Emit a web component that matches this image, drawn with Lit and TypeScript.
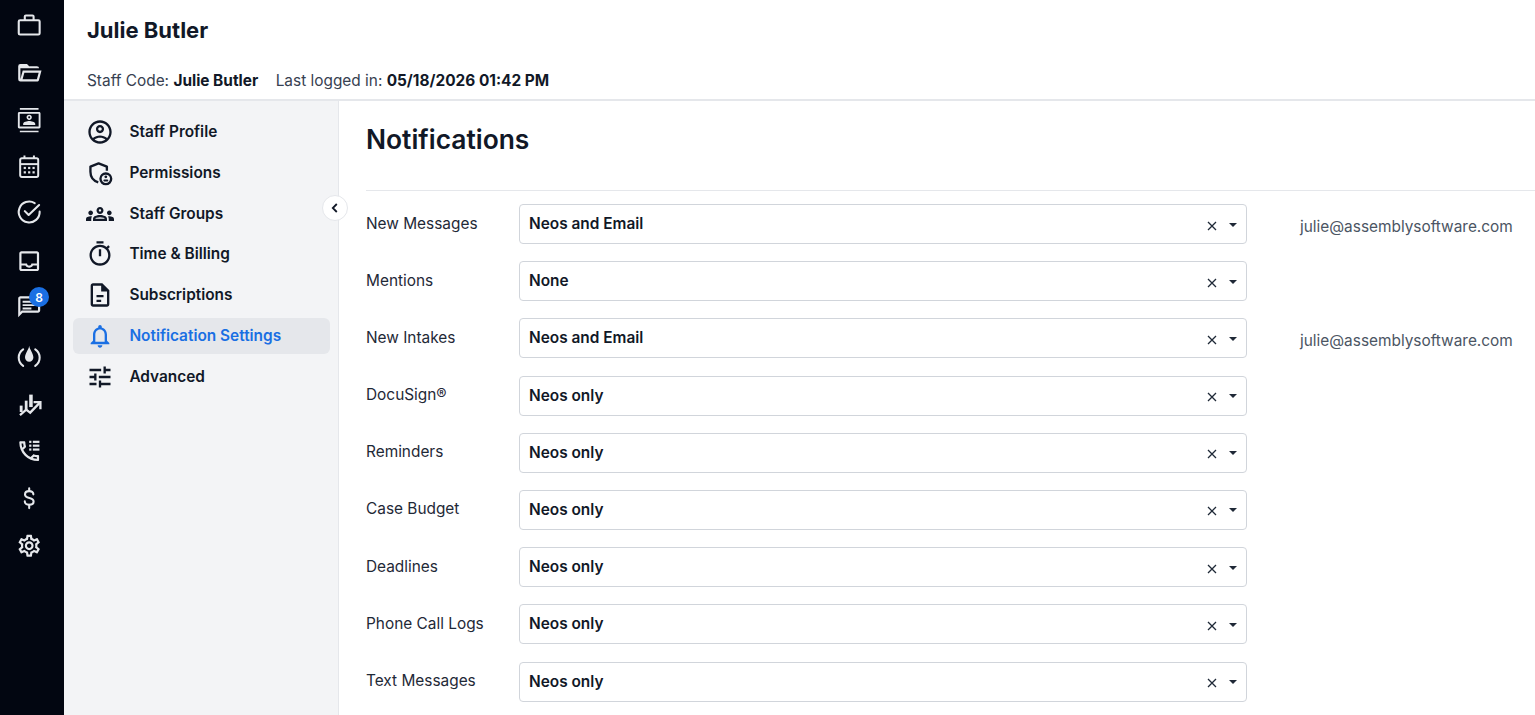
import { LitElement, html, css, svg } from "lit";
import { customElement } from "lit/decorators.js";

const fillI = (d: string) => svg`<path fill="currentColor" fill-rule="evenodd" d=${d}></path>`;

const rail = [
  { dy: 0, icon: svg`<g fill="none" stroke="currentColor" stroke-width="1.900" stroke-linejoin="round"><rect x="2.500" y="7.500" width="19" height="13" rx="1.200"/><path d="M8 7.500V4.200a1 1 0 0 1 1-1h6a1 1 0 0 1 1 1v3.300"/></g>` },
  { dy: -0.5, icon: fillI("M6.100 10 4 18V8h17a2 2 0 0 0-2-2h-7l-2-2H4a2 2 0 0 0-2 2v12a2 2 0 0 0 2 2h15c.9 0 1.700-.6 1.900-1.500L23.200 10H6.100M19 18H6l1.600-6h13L19 18Z") },
  { dy: 0, icon: fillI("M20.500 1H3.500v1.500h17V1zM3.500 23h17v-1.500h-17V23zM21 4.500H3C2.200 4.500 1.700 5.100 1.700 5.800v12.400C1.700 18.900 2.200 19.500 3 19.500h18c.8 0 1.300-.6 1.300-1.300V5.800C22.300 5.100 21.800 4.500 21 4.500zm-.4 13.300H3.400V6.200h17.200v11.600zM12 11.800c1.400 0 2.400-1.100 2.400-2.400S13.400 7 12 7 9.600 8.100 9.600 9.400 10.600 11.800 12 11.800zm0-3.400c.5 0 .9.4.9 1s-.4 1-.9 1-.9-.4-.9-1 .4-1 .9-1zM17.500 15.300c0-1.800-3.700-2.600-5.500-2.600s-5.500.8-5.500 2.600v1.100h11v-1.100z") },
  { dy: 0.6, icon: svg`<g fill="none" stroke="currentColor" stroke-width="1.800"><rect x="3.800" y="4.500" width="16.400" height="17" rx="1.500"/><path d="M3.800 9.800h16.400"/></g><path fill="currentColor" d="M6.800 2h1.800v3H6.800zM15.400 2h1.800v3h-1.800z"/><g fill="currentColor"><rect x="7" y="12.300" width="2" height="2"/><rect x="11" y="12.300" width="2" height="2"/><rect x="15" y="12.300" width="2" height="2"/><rect x="7" y="16.300" width="2" height="2"/><rect x="11" y="16.300" width="2" height="2"/><rect x="15" y="16.300" width="2" height="2"/></g>` },
  { dy: 2.3, icon: svg`<g fill="none" stroke="currentColor" stroke-width="1.900" stroke-linecap="round" stroke-linejoin="round"><path d="M17 4.200A9.500 9.500 0 1 0 21.500 12"/><path d="M8 11.500l3.500 3.500L21 6"/></g>` },
  { dy: 0, icon: fillI("M19 3H5c-1.100 0-2 .9-2 2v14c0 1.100.9 2 2 2h14c1.100 0 2-.9 2-2V5c0-1.100-.9-2-2-2zm0 16H5v-3h3.560c.69 1.190 1.970 2 3.450 2s2.750-.81 3.440-2H19v3zm0-5h-4.990c0 1.100-.9 2-2 2s-2-.9-2-2H5V5h14v9z") },
  { dy: 2.7, icon: fillI("M20 3H4C2.900 3 2 3.900 2 5v17l4-4h14c1.100 0 2-.9 2-2V5c0-1.100-.9-2-2-2zm0 13H5.170L4 17.170V5h16v11zM6 7h12v1.800H6zM6 10.100h12v1.800H6zM6 13.200h8v1.800H6z") },
  { dy: 0, icon: svg`<g fill="none" stroke="currentColor" stroke-width="1.900" stroke-linecap="round"><path d="M6.500 5.800a9 9 0 0 0 0 15"/><path d="M17.500 5.800a9 9 0 0 1 0 15"/></g><path fill="currentColor" d="M12 2.500C11.600 6 8.200 9.500 8.200 13.300a3.800 3.800 0 0 0 7.600 0C15.800 9.500 12.400 6 12 2.500z"/>` },
  { dy: 0, icon: svg`<g fill="currentColor"><rect x="3.400" y="14.200" width="2.600" height="5.800"/><rect x="8" y="9.700" width="2.500" height="8.300"/><rect x="12" y="4.200" width="3.200" height="11.300"/></g><g fill="none" stroke="currentColor" stroke-width="2.100"><path d="M3.600 22.800l5.700-4.900 3.600 2.700 8.800-9.100"/><path d="M16 11h6.200v6.500"/></g>` },
  { dy: 0, icon: svg`${fillI("M6.540 5c.06.89.21 1.760.45 2.590l-1.200 1.200c-.41-1.200-.67-2.470-.76-3.790h1.510m9.860 12.020c.85.24 1.720.39 2.600.45v1.490c-1.320-.09-2.590-.35-3.800-.75l1.200-1.190M7.500 3H4c-.55 0-1 .45-1 1 0 9.390 7.610 17 17 17 .55 0 1-.45 1-1v-3.490c0-.55-.45-1-1-1-1.240 0-2.450-.2-3.570-.57-.1-.04-.21-.05-.31-.05-.26 0-.51.1-.71.29l-2.200 2.200c-2.830-1.450-5.150-3.760-6.590-6.590l2.200-2.200c.28-.28.36-.67.25-1.020C8.700 6.450 8.500 5.250 8.500 4c0-.55-.45-1-1-1z")}<g fill="currentColor"><rect x="12" y="2.500" width="2" height="2"/><rect x="15.300" y="2.500" width="6" height="2"/><rect x="12" y="6" width="2" height="2"/><rect x="15.300" y="6" width="6" height="2"/><rect x="12" y="9.500" width="2" height="2"/><rect x="15.300" y="9.500" width="6" height="2"/></g>` },
  { dy: 0, icon: svg`<g fill="none" stroke="currentColor" stroke-width="1.900" stroke-linecap="round"><path d="M15.800 8.500c0-1.900-1.600-2.900-3.800-2.900s-3.800 1.100-3.800 3c0 4.300 7.800 2.100 7.800 6.300 0 2-1.800 3-4 3s-4-1.100-4-3"/><path d="M12 3v2.500M12 18v3"/></g>` },
  { dy: -0.5, icon: fillI("M19.430 12.980c.04-.32.07-.64.07-.98 0-.34-.03-.66-.07-.98l2.110-1.650c.19-.15.24-.42.12-.64l-2-3.460c-.09-.16-.26-.25-.44-.25-.06 0-.12.01-.17.03l-2.490 1c-.52-.4-1.080-.73-1.690-.98l-.38-2.650C14.460 2.180 14.250 2 14 2h-4c-.25 0-.46.18-.49.42l-.38 2.650c-.61.25-1.170.59-1.690.98l-2.490-1c-.06-.02-.12-.03-.18-.03-.17 0-.34.09-.43.25l-2 3.460c-.13.22-.07.49.12.64l2.110 1.650c-.04.32-.07.65-.07.98 0 .33.03.66.07.98l-2.110 1.650c-.19.15-.24.42-.12.64l2 3.460c.09.16.26.25.44.25.06 0 .12-.01.17-.03l2.490-1c.52.4 1.080.73 1.690.98l.38 2.650c.03.24.24.42.49.42h4c.25 0 .46-.18.49-.42l.38-2.650c.61-.25 1.170-.59 1.690-.98l2.490 1c.06.02.12.03.18.03.17 0 .34-.09.43-.25l2-3.460c.12-.22.07-.49-.12-.64l-2.110-1.650zm-1.980-1.710c.04.31.05.52.05.73 0 .21-.02.43-.05.73l-.14 1.130.89.7 1.080.84-.7 1.210-1.270-.51-1.040-.42-.9.68c-.43.32-.84.56-1.250.73l-1.060.43-.16 1.130-.2 1.350h-1.400l-.19-1.350-.16-1.130-1.060-.43c-.43-.18-.83-.41-1.230-.71l-.91-.7-1.060.43-1.270.51-.7-1.210 1.080-.84.89-.7-.14-1.130c-.03-.31-.05-.54-.05-.74s.02-.43.05-.73l.14-1.130-.89-.7-1.080-.84.7-1.210 1.270.51 1.040.42.9-.68c.43-.32.84-.56 1.250-.73l1.060-.43.16-1.130.2-1.350h1.390l.19 1.350.16 1.130 1.060.43c.43.18.83.41 1.230.71l.91.7 1.060-.43 1.270-.51.7 1.210-1.070.85-.89.7.14 1.130zM12 8c-2.210 0-4 1.790-4 4s1.790 4 4 4 4-1.790 4-4-1.790-4-4-4zm0 6c-1.100 0-2-.9-2-2s.9-2 2-2 2 .9 2 2-.9 2-2 2z") },
];

const nav = [
  { label: "Staff Profile", icon: fillI("M12 2C6.480 2 2 6.480 2 12s4.480 10 10 10 10-4.480 10-10S17.520 2 12 2zM7.350 18.500C8.660 17.560 10.260 17 12 17s3.340.56 4.650 1.500C15.340 19.440 13.740 20 12 20s-3.340-.56-4.650-1.500zm10.790-1.380C16.450 15.800 14.320 15 12 15s-4.450.8-6.140 2.120C4.700 15.730 4 13.950 4 12c0-4.420 3.580-8 8-8s8 3.580 8 8c0 1.950-.7 3.730-1.860 5.120zM12 6c-1.930 0-3.500 1.570-3.500 3.500S10.070 13 12 13s3.500-1.570 3.500-3.500S13.930 6 12 6zm0 5c-.83 0-1.500-.67-1.500-1.500S11.170 8 12 8s1.500.67 1.500 1.500S12.830 11 12 11z") },
  { label: "Permissions", icon: svg`<g fill="none" stroke="currentColor" stroke-width="2" stroke-linejoin="round"><path d="M10.500 20C6.500 18.800 3.800 15.500 3.800 11V6.500l7-2.800 7.100 2.800V10"/><circle cx="17" cy="17" r="4.600"/></g><g fill="currentColor"><circle cx="17" cy="15.300" r="1.200"/><rect x="14.900" y="17.500" width="4.200" height="1.700" rx=".85"/></g>` },
  { label: "Staff Groups", icon: fillI("M4 13c1.100 0 2-.9 2-2s-.9-2-2-2-2 .9-2 2 .9 2 2 2zm1.130 1.100c-.37-.06-.74-.1-1.130-.1-.99 0-1.930.21-2.780.58C.48 14.900 0 15.620 0 16.430V18h4.500v-1.610c0-.83.23-1.610.63-2.290zM20 13c1.100 0 2-.9 2-2s-.9-2-2-2-2 .9-2 2 .9 2 2 2zm4 3.430c0-.81-.48-1.530-1.220-1.850-.85-.37-1.790-.58-2.780-.58-.39 0-.76.04-1.130.1.4.68.63 1.460.63 2.290V18H24v-1.570zm-7.760-2.650c-1.170-.52-2.610-.9-4.240-.9-1.630 0-3.070.39-4.240.9C6.680 14.130 6 15.210 6 16.390V18h12v-1.610c0-1.180-.68-2.260-1.760-2.610zM8.070 16c.09-.23.13-.39.91-.69.97-.38 1.990-.56 3.020-.56s2.050.18 3.020.56c.77.3.81.46.91.69H8.070zM12 8c.55 0 1 .45 1 1s-.45 1-1 1-1-.45-1-1 .45-1 1-1m0-2c-1.660 0-3 1.340-3 3s1.340 3 3 3 3-1.340 3-3-1.340-3-3-3z") },
  { label: "Time & Billing", icon: fillI("M9 1h6v2H9zM13 8h-2v6h2zM19.030 7.390l1.420-1.420c-.43-.51-.9-.99-1.410-1.410l-1.420 1.420C16.070 4.740 14.120 4 12 4c-4.970 0-9 4.030-9 9s4.020 9 9 9 9-4.030 9-9c0-2.120-.74-4.070-1.970-5.610zM12 20c-3.870 0-7-3.130-7-7s3.130-7 7-7 7 3.130 7 7-3.130 7-7 7z") },
  { label: "Subscriptions", icon: fillI("M14 2H6c-1.100 0-2 .9-2 2v16c0 1.100.9 2 2 2h12c1.100 0 2-.9 2-2V8l-6-6zM18 20H6V4h7v5h5v11zM9 12h6v2H9zM9 16h4v2H9z") },
  { label: "Notification Settings", active: true, icon: fillI("M12 22c1.100 0 2-.9 2-2h-4c0 1.100.9 2 2 2zm6-6v-5c0-3.070-1.630-5.640-4.500-6.320V4c0-.83-.67-1.500-1.500-1.500s-1.500.67-1.500 1.500v.68C7.640 5.360 6 7.920 6 11v5l-2 2v1h16v-1l-2-2zm-2 1H8v-6c0-2.480 1.510-4.500 4-4.500s4 2.020 4 4.500v6z") },
  { label: "Advanced", icon: fillI("M3 17v2h6v-2H3zM3 5v2h10V5H3zm10 16v-2h8v-2h-8v-2h-2v6h2zM7 9v2H3v2h4v2h2V9H7zm14 4v-2H11v2h10zm-6-4h2V7h4V5h-4V3h-2v6z") },
];

const rows = [
  ["New Messages", "Neos and Email", "julie@assemblysoftware.com"],
  ["Mentions", "None", ""],
  ["New Intakes", "Neos and Email", "julie@assemblysoftware.com"],
  ["DocuSign®", "Neos only", ""],
  ["Reminders", "Neos only", ""],
  ["Case Budget", "Neos only", ""],
  ["Deadlines", "Neos only", ""],
  ["Phone Call Logs", "Neos only", ""],
  ["Text Messages", "Neos only", ""],
];

@customElement("app-root")
export class AppRoot extends LitElement {
  static styles = css`
    :host { display: flex; height: 100vh; overflow: hidden; font-family: Inter, "Liberation Sans", sans-serif; color: #111827; background: #fff; }
    .rail { width: 64px; flex: none; background: #020611; color: #e5e7eb; display: flex; flex-direction: column; padding-top: 1.500px; box-sizing: border-box; }
    .rail-item { position: relative; height: 47.300px; flex: none; display: flex; align-items: center; justify-content: center; width: 100%; box-sizing: border-box; padding-right: 6px; }
    .rail-item svg { width: 26.400px; height: 26.400px; display: block; overflow: visible; }
    .badge { position: absolute; left: 29px; top: 2px; width: 20px; height: 20px; border-radius: 50%; background: #1a6fe3; color: #fff; font-size: 12px; font-weight: 600; display: flex; align-items: center; justify-content: center; }
    .body { flex: 1; min-width: 0; display: flex; flex-direction: column; }
    .header { height: 101px; flex: none; box-sizing: border-box; border-bottom: 2px solid #e5e7eb; padding: 16px 0 0 23px; }
    .name { font-size: 22px; font-weight: 700; line-height: 28px; color: #111827; }
    .meta { display: flex; gap: 17.500px; margin-top: 27px; font-size: 15.400px; line-height: 20px; color: #374151; }
    .meta b { font-weight: 700; color: #111827; }
    .content { flex: 1; display: flex; min-height: 0; }
    .side { position: relative; width: 275px; flex: none; box-sizing: border-box; background: #f3f4f6; border-right: 1px solid #e5e7eb; padding: 13px 8px 0 9px; display: flex; flex-direction: column; gap: 4.750px; }
    .nav { height: 36px; flex: none; display: flex; align-items: center; gap: 15.800px; padding-left: 12.600px; border-radius: 6px; font-size: 15.400px; font-weight: 600; color: #111827; }
    .nav span { margin-bottom: 1px; }
    .nav svg { width: 28px; height: 28px; flex: none; color: #111827; }
    .nav.active { background: #e5e7eb; color: #1a6fe3; }
    .nav.active svg { color: #1a6fe3; }
    .collapse { position: absolute; right: -10px; top: 94px; width: 26px; height: 26px; box-sizing: border-box; border-radius: 50%; background: #fff; border: 1px solid #e5e7eb; display: flex; align-items: center; justify-content: center; color: #111827; }
    .collapse svg { width: 12px; height: 12px; }
    .main { flex: 1; min-width: 0; padding: 21px 0 0 27px; }
    h1 { margin: 0; font-size: 26.400px; font-weight: 600; line-height: 34px; color: #111827; }
    .rule { height: 1px; background: #e5e7eb; margin-top: 34px; }
    .grid { display: grid; grid-template-columns: 153px 728px 1fr; grid-auto-rows: 40px; row-gap: 17.200px; margin-top: 13px; }
    .label { font-size: 15.400px; line-height: 20px; padding-top: 9.500px; color: #1f2937; }
    .select { box-sizing: border-box; border: 1px solid #d1d5db; border-radius: 4px; display: flex; align-items: center; padding: 0 9px; font-size: 15.400px; font-weight: 600; color: #111827; }
    .value { flex: 1; padding-bottom: 1px; }
    .clear { width: 10px; height: 10px; margin: 3px 12px 0 0; color: #1f2937; }
    .caret { width: 0; height: 0; border-left: 4px solid transparent; border-right: 4px solid transparent; border-top: 4px solid #1f2937; margin-top: 1px; }
    .email { padding: 13px 0 0 53px; font-size: 15.400px; line-height: 20px; color: #4b5563; }
  `;

  render() {
    return html`
      <nav class="rail">
        ${rail.map((r, i) => html`<div class="rail-item">
          <svg viewBox="0 ${r.dy} 24 24">${r.icon}</svg>
          ${i === 6 ? html`<span class="badge">8</span>` : ""}
        </div>`)}
      </nav>
      <div class="body">
        <header class="header">
          <div class="name">Julie Butler</div>
          <div class="meta">
            <span>Staff Code: <b>Julie Butler</b></span>
            <span>Last logged in: <b>05/18/2026 01:42 PM</b></span>
          </div>
        </header>
        <div class="content">
          <aside class="side">
            ${nav.map((n) => html`<div class="nav ${n.active ? "active" : ""}">
              <svg viewBox="0 0 24 24">${n.icon}</svg><span>${n.label}</span>
            </div>`)}
            <div class="collapse">
              <svg viewBox="0 0 12 12"><path d="M7.800 2 3.800 6l4 4" fill="none" stroke="currentColor" stroke-width="1.800"/></svg>
            </div>
          </aside>
          <main class="main">
            <h1>Notifications</h1>
            <div class="rule"></div>
            <div class="grid">
              ${rows.map(([l, v, e]) => html`
                <div class="label">${l}</div>
                <div class="select">
                  <span class="value">${v}</span>
                  <svg class="clear" viewBox="0 0 10 10"><path d="M1 1l8 8M9 1l-8 8" stroke="currentColor" stroke-width="1.300" fill="none"/></svg>
                  <span class="caret"></span>
                </div>
                <div class="email">${e}</div>
              `)}
            </div>
          </main>
        </div>
      </div>
    `;
  }
}
